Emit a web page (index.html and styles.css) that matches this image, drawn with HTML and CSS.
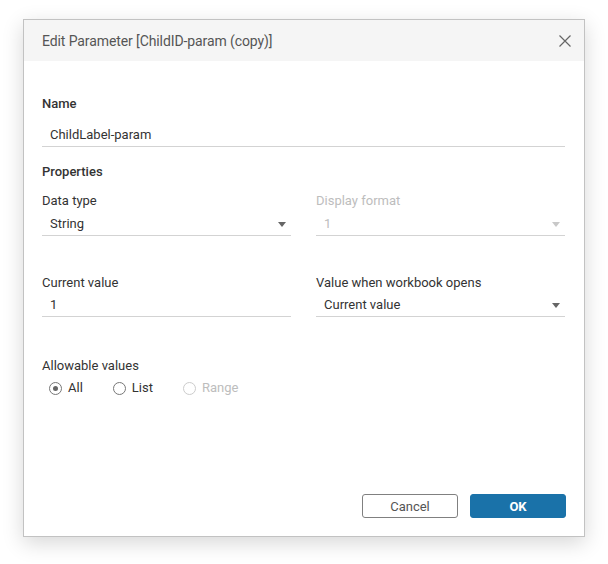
FILE: index.html
```html
<!DOCTYPE html>
<html>
<head>
<meta charset="utf-8">
<link rel="stylesheet" href="styles.css">
</head>
<body>
<div class="dialog">
  <div class="header">
    <span class="title">Edit Parameter [ChildID-param (copy)]</span>
    <svg class="close" width="12" height="12" viewBox="0 0 12 12"><path d="M0.5 0.5 L11.5 11.5 M11.5 0.5 L0.5 11.5" stroke="#666" stroke-width="1.2" fill="none"/></svg>
  </div>
  <div class="content">
    <div class="name-block">
      <div class="label strong">Name</div>
      <div class="input name-input"><span class="value">ChildLabel-param</span></div>
    </div>
    <div class="section strong">Properties</div>
    <div class="row row-first">
      <div class="field">
        <div class="label">Data type</div>
        <div class="input"><span class="value">String</span><span class="caret"></span></div>
      </div>
      <div class="field disabled">
        <div class="label">Display format</div>
        <div class="input"><span class="value">1</span><span class="caret"></span></div>
      </div>
    </div>
    <div class="row row-second">
      <div class="field">
        <div class="label">Current value</div>
        <div class="input"><span class="value">1</span></div>
      </div>
      <div class="field">
        <div class="label">Value when workbook opens</div>
        <div class="input"><span class="value">Current value</span><span class="caret"></span></div>
      </div>
    </div>
    <div class="allow">
      <div class="label">Allowable values</div>
      <div class="radios">
        <div class="radio checked"><span class="circle"></span><span>All</span></div>
        <div class="radio"><span class="circle"></span><span>List</span></div>
        <div class="radio disabled"><span class="circle"></span><span>Range</span></div>
      </div>
    </div>
    <div class="footer">
      <button class="btn cancel">Cancel</button>
      <button class="btn ok">OK</button>
    </div>
  </div>
</div>
</body>
</html>
```
FILE: styles.css
```css
html, body {
  margin: 0;
  padding: 0;
  background: #ffffff;
}
body {
  font-family: Roboto, "Liberation Sans", Arial, sans-serif;
  font-size: 13px;
  color: #333333;
  padding: 19px 0 0 23px;
  min-height: 564px;
  box-sizing: border-box;
}
.dialog {
  width: 560px;
  height: 516px;
  border: 1px solid #c2c2c2;
  background: #ffffff;
  box-shadow: 0 6px 20px rgba(0, 0, 0, 0.16);
  display: flex;
  flex-direction: column;
}
.header {
  height: 41px;
  background: #f5f5f5;
  display: flex;
  align-items: center;
  justify-content: space-between;
  padding: 0 13px 0 18px;
}
.title {
  font-size: 14px;
  color: #555555;
  letter-spacing: -0.1px;
}
.close {
  display: block;
}
.content {
  flex: 1;
  display: flex;
  flex-direction: column;
  padding: 35px 19px 18px 18px;
}
.label {
  line-height: 16px;
  height: 16px;
  color: #333333;
}
.strong {
  font-weight: 500;
}
.input {
  height: 22px;
  border-bottom: 1px solid #d3d3d3;
  display: flex;
  align-items: center;
  justify-content: space-between;
  padding: 0 5px 0 8px;
}
.value {
  line-height: 22px;
  color: #333333;
}
.name-input {
  margin-top: 12px;
}
.section {
  margin-top: 17px;
  line-height: 16px;
}
.row {
  display: grid;
  grid-template-columns: 249px 249px;
  column-gap: 25px;
}
.row-first {
  margin-top: 13px;
}
.row-first .input {
  margin-top: 4px;
}
.row-second {
  margin-top: 39px;
}
.row-second .input {
  margin-top: 3px;
}
.caret {
  width: 0;
  height: 0;
  border-left: 4px solid transparent;
  border-right: 4px solid transparent;
  border-top: 5px solid #666666;
}
.disabled .label,
.disabled .value {
  color: #bdbdbd;
}
.disabled .caret {
  border-top-color: #c8c8c8;
}
.allow {
  margin-top: 41px;
}
.radios {
  display: flex;
  align-items: center;
  margin-top: 6px;
  padding-left: 7px;
  height: 16px;
}
.radio {
  display: flex;
  align-items: center;
  margin-right: 30px;
  line-height: 16px;
}
.circle {
  width: 11px;
  height: 11px;
  border: 1px solid #777777;
  border-radius: 50%;
  margin-right: 6px;
  display: flex;
  align-items: center;
  justify-content: center;
}
.checked .circle::after {
  content: "";
  width: 5px;
  height: 5px;
  border-radius: 50%;
  background: #666666;
}
.radio.disabled {
  color: #bdbdbd;
}
.radio.disabled .circle {
  border-color: #cccccc;
}
.footer {
  margin-top: auto;
  margin-right: -1px;
  display: flex;
  justify-content: flex-end;
  gap: 12px;
}
.btn {
  width: 96px;
  height: 24px;
  border-radius: 3px;
  font-family: Roboto, "Liberation Sans", Arial, sans-serif;
  font-size: 13px;
  padding: 0;
  cursor: pointer;
}
.cancel {
  background: #ffffff;
  border: 1px solid #808080;
  color: #555555;
}
.ok {
  background: #1a72a9;
  border: 1px solid #1a72a9;
  color: #ffffff;
  font-weight: 700;
}
```
